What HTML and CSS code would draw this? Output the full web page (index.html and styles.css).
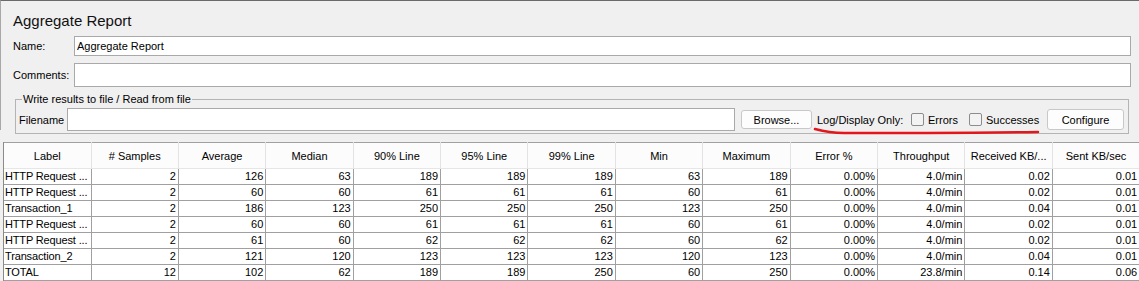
FILE: index.html
```html
<!DOCTYPE html>
<html lang="en">
<head>
    <meta charset="UTF-8">
    <title>Aggregate Report</title>
    <link rel="stylesheet" href="styles.css">
</head>
<body>

    <div class="panel">
        <h1 class="title">Aggregate Report</h1>
        <div class="field-row name-row">
            <label class="field-label">Name:</label>
            <input class="text-input" type="text" value="Aggregate Report">
        </div>
        <div class="field-row comments-row">
            <label class="field-label">Comments:</label>
            <input class="text-input" type="text">
        </div>
        <fieldset class="file-group">
            <legend>Write results to file / Read from file</legend>
            <div class="file-row">
                <span class="file-label">Filename</span>
                <input class="filename" type="text">
                <button class="btn browse">Browse...</button>
                <span class="log-only">Log/Display Only:</span>
                <label class="check errors"><span class="box"></span>Errors</label>
                <label class="check successes"><span class="box"></span>Successes</label>
                <button class="btn configure">Configure</button>
            </div>
        </fieldset>
    </div>

    <!-- red pen mark over the screenshot -->
    <svg class="pen-mark" width="232" height="12" viewBox="0 0 232 12">
        <path d="M3 3 C 14 6, 24 7, 32 7 L 115 7 C 160 7, 200 6.5, 226 6" fill="none" stroke="#e3161b" stroke-width="2.5" stroke-linecap="round"/>
    </svg>

    <div class="table-wrap">
        <table class="report">
            <colgroup>
                <col class="c-label">
                <col><col><col><col><col><col><col><col><col><col><col><col>
            </colgroup>
            <thead>
                <tr>
                    <th>Label</th><th># Samples</th><th>Average</th><th>Median</th><th>90% Line</th><th>95% Line</th><th>99% Line</th><th>Min</th><th>Maximum</th><th>Error %</th><th>Throughput</th><th>Received KB/...</th><th>Sent KB/sec</th>
                </tr>
            </thead>
            <tbody id="rows"></tbody>
        </table>
    </div>

    <script>
        var data = [
            ["HTTP Request ...", 2, 126, 63, 189, 189, 189, 63, 189, "0.00%", "4.0/min", "0.02", "0.01"],
            ["HTTP Request ...", 2, 60, 60, 61, 61, 61, 60, 61, "0.00%", "4.0/min", "0.02", "0.01"],
            ["Transaction_1", 2, 186, 123, 250, 250, 250, 123, 250, "0.00%", "4.0/min", "0.04", "0.01"],
            ["HTTP Request ...", 2, 60, 60, 61, 61, 61, 60, 61, "0.00%", "4.0/min", "0.02", "0.01"],
            ["HTTP Request ...", 2, 61, 60, 62, 62, 62, 60, 62, "0.00%", "4.0/min", "0.02", "0.01"],
            ["Transaction_2", 2, 121, 120, 123, 123, 123, 120, 123, "0.00%", "4.0/min", "0.04", "0.01"],
            ["TOTAL", 12, 102, 62, 189, 189, 250, 60, 250, "0.00%", "23.8/min", "0.14", "0.06"]
        ];

        var body = document.getElementById("rows");
        data.forEach(function(row) {
            var tr = document.createElement("tr");
            row.forEach(function(value, i) {
                var td = document.createElement("td");
                td.className = i === 0 ? "label-cell" : "num";
                td.textContent = value;
                tr.appendChild(td);
            });
            body.appendChild(tr);
        });
    </script>

</body>
</html>
```

FILE: styles.css
```css
html, body { margin: 0; padding: 0; }
body {
    width: 1139px; height: 281px; overflow: hidden; position: relative;
    background: #f0f0f0; font-family: "Liberation Sans", Arial, sans-serif; font-size: 11px; color: #000;
}

.panel { border-top: 1px solid #6a6a6a; border-left: 1px solid #a8a8a8; padding-top: 11px; height: 130px; box-sizing: border-box; }
.title { margin: 0 0 0 12px; font-size: 15px; font-weight: normal; line-height: 18px; color: #111; }

.field-row { display: flex; align-items: center; margin-right: 8px; }
.name-row { margin-top: 6px; height: 20px; }
.comments-row { margin-top: 7px; height: 24px; }
.field-label { width: 61px; padding-left: 12px; flex: none; }
.text-input {
    flex: 1; height: 100%; box-sizing: border-box; margin: 0; padding: 0 2px;
    border: 1px solid #a9a9a9; background: #fff; font: inherit; outline: none;
}

.file-group {
    margin: 5px 10px 0 14px; padding: 2px 0 2px 3px; border: 1px solid #b4b4b4;
    min-width: 0;
}
.file-group legend { padding: 0 1px; margin-left: 3px; line-height: 14px; }
.file-row { display: flex; align-items: center; height: 23px; }
.file-label { width: 48px; flex: none; }
.filename {
    width: 668px; height: 23px; box-sizing: border-box; margin: 0; padding: 0 2px;
    border: 1px solid #a9a9a9; background: #fff; font: inherit; flex: none;
}

.btn {
    box-sizing: border-box; margin: 0; padding: 0; font: inherit; color: #000;
    background: #fdfdfd; border: 1px solid #c8c8c8; border-radius: 3px;
}
.browse { width: 71px; height: 19px; margin-left: 6px; }
.log-only { margin-left: 5px; width: 89px; }
.check { display: flex; align-items: center; }
.check .box {
    width: 11px; height: 11px; margin-right: 4px; border: 1px solid #8c8c8c; border-radius: 2px;
    background: #f3f3f3;
}
.errors { margin-left: 5px; width: 58px; }
.successes { width: 72px; }
.configure { width: 77px; height: 21px; margin-left: 6px; }

.pen-mark { position: absolute; left: 812px; top: 126px; }

.table-wrap { margin: 12px 0 0 3px; border-left: 1px solid #8a8a8a; overflow: hidden; }
.report { border-collapse: collapse; table-layout: fixed; width: 1136px; background: #fff; }
.report col { width: 87.4px; }
.report col.c-label { width: 87px; }
.report th {
    height: 25px; padding: 0; font-weight: normal; text-align: center; white-space: nowrap; overflow: hidden;
    background: #fcfcfc; border-top: 1px solid #a0a0a0; border-right: 1px solid #e3e3e3; border-bottom: 1px solid #e6e6e6;
}
.report td {
    height: 15px; line-height: 15px; padding: 0 2px 0 1px; white-space: nowrap; overflow: hidden;
    border-right: 1px solid #a0a0a0; border-bottom: 1px solid #a0a0a0;
}
.report td.num { text-align: right; }
.report td.label-cell { text-align: left; padding-right: 0; letter-spacing: -0.15px; }
```
